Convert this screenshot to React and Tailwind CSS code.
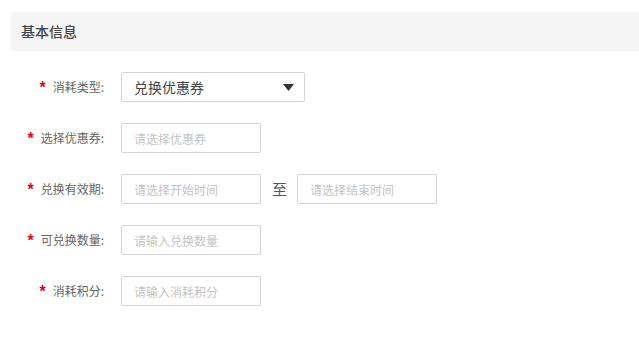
import React from 'react';

const fields = [
  { label: '选择优惠券', placeholder: '请选择优惠券' },
  { label: '兑换有效期', placeholder: '请选择开始时间', range: '请选择结束时间' },
  { label: '可兑换数量', placeholder: '请输入兑换数量' },
  { label: '消耗积分', placeholder: '请输入消耗积分' },
];

const Label = ({ text }) => (
  <div className="w-[104px] flex items-center justify-end text-[12px] text-[#666]">
    <span className="text-[#e60012] text-[16px] font-bold leading-none mr-[7px] translate-y-[1px]" style={{ fontFamily: '"Liberation Sans", sans-serif' }}>*</span>
    <span>{text}:</span>
  </div>
);

const Input = ({ placeholder }) => (
  <input
    className="w-[140px] h-[30px] border border-[#d4d4d4] rounded-[2px] px-[12px] text-[12px] placeholder:text-[#c4c4c4] outline-none"
    placeholder={placeholder}
  />
);

const App = () => {
  return (
    <div
      className="w-[639px] h-[341px] bg-white pt-[12px]"
      style={{ fontFamily: '"Noto Sans CJK SC", "Noto Sans", sans-serif' }}
    >
      {/* Section header */}
      <div className="ml-[11px] h-[39px] bg-[#f5f5f5] flex items-center pl-[10px] text-[14px] font-medium text-[#444]">
        基本信息
      </div>

      <div className="mt-[21px] flex flex-col gap-[21px]">
        {/* Select row */}
        <div className="flex items-center">
          <Label text="消耗类型" />
          <div className="ml-[17px] w-[184px] h-[30px] border border-[#d4d4d4] rounded-[2px] flex items-center justify-between pl-[12px] pr-[10px]">
            <span className="text-[14px] text-[#444]">兑换优惠券</span>
            <svg width="11" height="7" viewBox="0 0 11 7">
              <path d="M0 0h11L5.5 7z" fill="#333" />
            </svg>
          </div>
        </div>

        {fields.map((f) => (
          <div key={f.label} className="flex items-center">
            <Label text={f.label} />
            <div className="ml-[17px] flex items-center">
              <Input placeholder={f.placeholder} />
              {f.range && (
                <>
                  <span className="ml-[11px] mr-[10px] text-[15px] text-[#555]">至</span>
                  <Input placeholder={f.range} />
                </>
              )}
            </div>
          </div>
        ))}
      </div>
    </div>
  );
};

export default App;
